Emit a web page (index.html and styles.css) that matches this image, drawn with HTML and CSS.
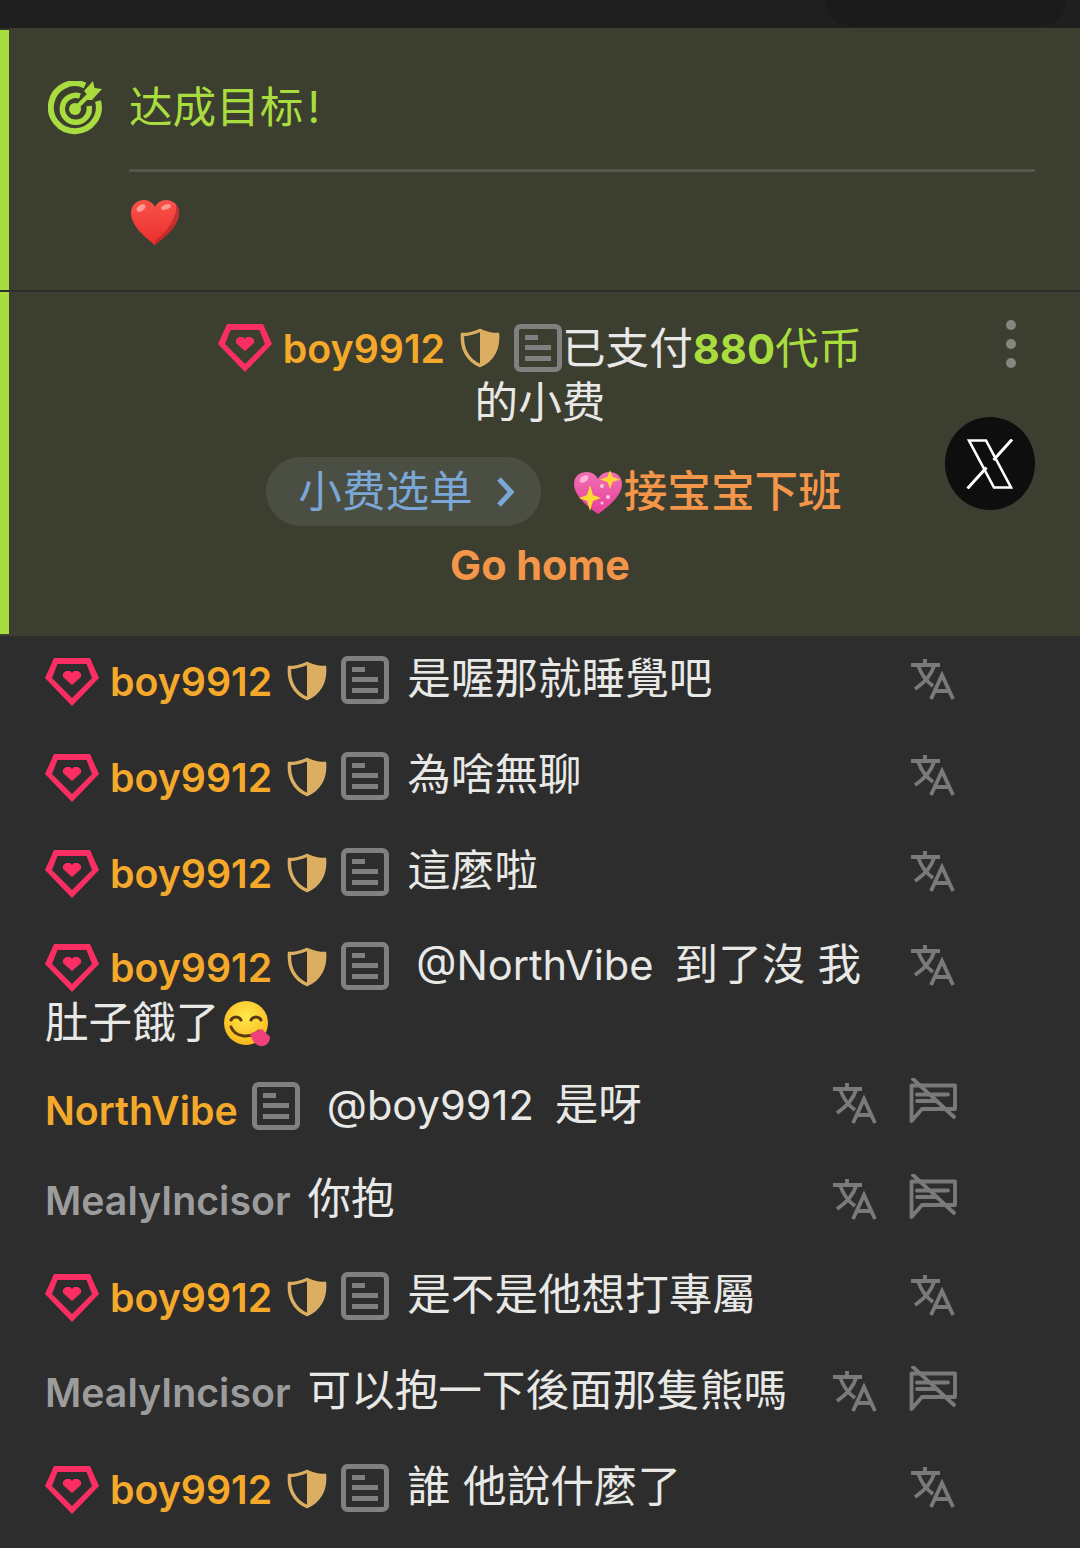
FILE: index.html
```html
<!DOCTYPE html>
<html lang="zh">
<head>
<meta charset="utf-8">
<title>Live chat</title>
<link rel="stylesheet" href="styles.css">
</head>
<body>
<svg class="defs" width="0" height="0" aria-hidden="true">
  <defs>
    <symbol id="gem" viewBox="0 0 54 48">
      <path fill="#fb2e63" fill-rule="evenodd" d="M9 0H45L54 20 27 48 0 20ZM12.500 6 7 20 27 40 47 20 41.500 6Z"/>
      <path fill="#fb2e63" d="M18 15.500 21 13H25L27 15 29 13H33L36 15.500V19L27 27 18 19Z"/>
    </symbol>
    <symbol id="shield" viewBox="0 0 40 40">
      <path fill="none" stroke="#dcae62" stroke-width="3.500" d="M20 2.500C26 5 32 6.500 37.500 6.500 38.500 20 33 32 20 37.500 7 32 1.500 20 2.500 6.500 8 6.500 14 5 20 2.500Z"/>
      <path fill="#dcae62" d="M20 2.500C26 5 32 6.500 37.500 6.500 38.500 20 33 32 20 37.500Z"/>
    </symbol>
    <symbol id="doc" viewBox="0 0 48 48">
      <rect x="2.500" y="2.500" width="43" height="43" rx="4" fill="none" stroke="#808080" stroke-width="5"/>
      <path fill="#808080" d="M11 11H24V16H11ZM11 21H37V26H11ZM11 32H37V37H11Z"/>
    </symbol>
    <symbol id="translate" viewBox="0 0 44 44">
      <g fill="none" stroke="#7a7a7a" stroke-width="3.800">
        <path d="M0 7H29M14 1V7M7 7C10 16 15 23 22 28M23 8C20 18 13 25 4 31"/>
        <path d="M20 41 31 17 42 41M24 33H38"/>
      </g>
    </symbol>
    <symbol id="mute" viewBox="0 0 48 47">
      <g fill="none" stroke="#7a7a7a" stroke-width="3.800" stroke-linejoin="round" stroke-linecap="round">
        <path d="M2.500 7.500H46V31H13L2.500 43Z"/>
        <path d="M8 16.500H39M8 23H27M4 1 45 39"/>
      </g>
    </symbol>
  </defs>
</svg>

<header class="topbar"><span class="topbar-pill"></span></header>

<main class="feed">
  <section class="goal card">
    <svg class="goal-icon" viewBox="0 0 54 54" aria-hidden="true">
      <g fill="none" stroke="#a9dc3e">
        <path stroke-width="6" d="M37 4.500A24 24 0 1 0 50 20"/>
        <path stroke-width="5.500" d="M32 15A13.500 13.500 0 1 0 41 25"/>
      </g>
      <circle cx="27" cy="28" r="6" fill="#a9dc3e"/>
      <path fill="none" stroke="#a9dc3e" stroke-width="4.500" d="M27 28 42 13"/>
      <path fill="#a9dc3e" d="M36 10 45 0 46.500 7 54 8 44 19H38L39.500 14Z"/>
    </svg>
    <div class="goal-body">
      <h2 class="goal-title">达成目标<span class="bang">!</span></h2>
      <div class="goal-note">
        <svg class="emoji" viewBox="0 0 48 46" aria-hidden="true">
          <defs>
            <linearGradient id="heart-red" x1="0" y1="0" x2="0" y2="1">
              <stop offset="0" stop-color="#f9524a"/><stop offset="1" stop-color="#ea2e2c"/>
            </linearGradient>
          </defs>
          <path fill="url(#heart-red)" d="M24 45C14 37 0 26 0 13 0 5 6 0 13 0 18 0 22 3 24 7 26 3 30 0 35 0 42 0 48 5 48 13 48 26 34 37 24 45Z"/>
          <path fill="#b5272a" d="M24 45C34 37 48 26 48 13 48 9 47 7 45 4 47 16 36 32 24 41Z" opacity=".7"/>
          <ellipse cx="10" cy="8" rx="5" ry="3" fill="#ff9a94" transform="rotate(-35 10 8)"/>
          <ellipse cx="35" cy="7" rx="5" ry="2.500" fill="#ff9a94" transform="rotate(-20 35 7)"/>
        </svg>
      </div>
    </div>
  </section>

  <section class="tip card">
    <p class="tip-line">
      <svg class="gem"><use href="#gem"/></svg><b class="name">boy9912</b><svg class="shield"><use href="#shield"/></svg><svg class="doc doc--tight"><use href="#doc"/></svg>已支付<b class="coins"><span class="latin">880</span>代币</b>的小费
    </p>
    <div class="tip-actions">
      <a class="pill">小费选单
        <svg class="chevron" viewBox="0 0 18 32" aria-hidden="true"><path d="M3 3 15 16 3 29" fill="none" stroke="#7aa7d6" stroke-width="5"/></svg>
      </a>
      <span class="tip-item">
        <svg class="emoji emoji--spark" viewBox="0 0 48 44" aria-hidden="true">
          <defs>
            <linearGradient id="heart-pink" x1="0" y1="0" x2="0" y2="1">
              <stop offset="0" stop-color="#f070b4"/><stop offset="1" stop-color="#e83e98"/>
            </linearGradient>
          </defs>
          <path fill="url(#heart-pink)" d="M24 44C14 37 0 26 0 14 0 6 6 2 13 2 18 2 22 5 24 9 26 5 30 2 35 2 42 2 48 6 48 14 48 26 34 37 24 44Z"/>
          <ellipse cx="10" cy="9" rx="5" ry="3" fill="#fbb3d9" transform="rotate(-35 10 9)"/>
          <path fill="#fdd835" d="M36 0 38.500 7 46 9.500 38.500 12 36 19 33.500 12 26 9.500 33.500 7ZM16 15 19 25 27 28 19 31 16 41 13 31 5 28 13 25Z"/>
          <circle cx="28" cy="16" r="2" fill="#fbc4e0"/><circle cx="34" cy="27" r="2" fill="#fbc4e0"/><circle cx="28" cy="33" r="1.500" fill="#fbc4e0"/>
        </svg>接宝宝下班
      </span>
    </div>
    <p class="tip-note">Go home</p>
    <div class="tip-menu"><i></i><i></i><i></i></div>
    <a class="share" aria-label="X">
      <svg viewBox="0 0 48 50" aria-hidden="true">
        <path fill="none" stroke="#fff" stroke-width="2.600" d="M3 1.500H20L45 48.500H28Z"/>
        <path fill="none" stroke="#fff" stroke-width="3" d="M46 0.500 27.500 21M1.500 49.500 20.500 28.500"/>
      </svg>
    </a>
  </section>

  <ul class="chat">
    <li class="row">
      <p class="msg"><svg class="gem"><use href="#gem"/></svg><b class="name">boy9912</b><svg class="shield"><use href="#shield"/></svg><svg class="doc"><use href="#doc"/></svg>是喔那就睡覺吧</p>
      <div class="actions"><svg class="tr"><use href="#translate"/></svg></div>
    </li>
    <li class="row">
      <p class="msg"><svg class="gem"><use href="#gem"/></svg><b class="name">boy9912</b><svg class="shield"><use href="#shield"/></svg><svg class="doc"><use href="#doc"/></svg>為啥無聊</p>
      <div class="actions"><svg class="tr"><use href="#translate"/></svg></div>
    </li>
    <li class="row">
      <p class="msg"><svg class="gem"><use href="#gem"/></svg><b class="name">boy9912</b><svg class="shield"><use href="#shield"/></svg><svg class="doc"><use href="#doc"/></svg>這麼啦</p>
      <div class="actions"><svg class="tr"><use href="#translate"/></svg></div>
    </li>
    <li class="row row--wrapped">
      <p class="msg"><svg class="gem"><use href="#gem"/></svg><b class="name">boy9912</b><svg class="shield"><use href="#shield"/></svg><svg class="doc"><use href="#doc"/></svg><span class="mention">@NorthVibe</span>到了沒 我肚子餓了<svg class="emoji emoji--yum" viewBox="0 0 48 46" aria-hidden="true">
          <defs>
            <radialGradient id="face" cx=".5" cy=".35" r=".7">
              <stop offset="0" stop-color="#ffe94d"/><stop offset="1" stop-color="#f9b317"/>
            </radialGradient>
          </defs>
          <circle cx="23" cy="22" r="22" fill="url(#face)"/>
          <g fill="none" stroke="#5b3a10" stroke-width="3" stroke-linecap="round">
            <path d="M8 19C10 15 16 15 18 19M28 19C30 15 36 15 38 19"/>
            <path d="M8 26C12 36 26 38 36 30"/>
          </g>
          <path fill="#f0417f" d="M27 33 39 28 47 36C47 42 42 46 37 45 32 44 29 39 27 33Z"/>
        </svg></p>
      <div class="actions"><svg class="tr"><use href="#translate"/></svg></div>
    </li>
    <li class="row row--after-wrap">
      <p class="msg"><b class="name name--plain">NorthVibe</b><svg class="doc"><use href="#doc"/></svg><span class="mention">@boy9912</span>是呀</p>
      <div class="actions"><svg class="tr"><use href="#translate"/></svg><svg class="off"><use href="#mute"/></svg></div>
    </li>
    <li class="row row--viewer">
      <p class="msg"><b class="name name--viewer">MealyIncisor</b>你抱</p>
      <div class="actions"><svg class="tr"><use href="#translate"/></svg><svg class="off"><use href="#mute"/></svg></div>
    </li>
    <li class="row">
      <p class="msg"><svg class="gem"><use href="#gem"/></svg><b class="name">boy9912</b><svg class="shield"><use href="#shield"/></svg><svg class="doc"><use href="#doc"/></svg>是不是他想打專屬</p>
      <div class="actions"><svg class="tr"><use href="#translate"/></svg></div>
    </li>
    <li class="row">
      <p class="msg"><b class="name name--viewer">MealyIncisor</b>可以抱一下後面那隻熊嗎</p>
      <div class="actions"><svg class="tr"><use href="#translate"/></svg><svg class="off"><use href="#mute"/></svg></div>
    </li>
    <li class="row">
      <p class="msg"><svg class="gem"><use href="#gem"/></svg><b class="name">boy9912</b><svg class="shield"><use href="#shield"/></svg><svg class="doc"><use href="#doc"/></svg>誰 他說什麼了</p>
      <div class="actions"><svg class="tr"><use href="#translate"/></svg></div>
    </li>
  </ul>
</main>
</body>
</html>
```

FILE: styles.css
```css
* { box-sizing: border-box; }

html, body {
  margin: 0;
  height: 1548px;
  overflow: hidden;
  background: #2d2d2d;
}

body {
  font-family: "Inter", "Noto Sans CJK TC", sans-serif;
  font-size: 43.6px;
  line-height: 54px;
  color: #e8e8e6;
}

p, h2, ul { margin: 0; padding: 0; font-weight: 400; }
ul { list-style: none; }
svg { flex: none; }

.defs { position: absolute; }

/* Top strip */
.topbar {
  position: relative;
  height: 28px;
  background: #1f1f1f;
}
.topbar-pill {
  position: absolute;
  left: 825px;
  top: 0;
  width: 240px;
  height: 26px;
  background: #1b1b1b;
  border-radius: 0 0 24px 24px;
}

/* Highlighted cards */
.feed { display: flex; flex-direction: column; }

.card {
  position: relative;
  background: #3c3e30;
  border-left: 9px solid #a9dc3e;
}

.goal {
  display: flex;
  height: 260px;
  margin-top: 2px;
  padding: 50px 45px 0 39px;
  gap: 27px;
  box-shadow: 9px -2px 0 #3c3e30;
}
.goal-icon { width: 54px; height: 54px; margin-top: 1px; }
.goal-body { flex: 1; }
.goal-title {
  font-family: "Inter", "Noto Sans CJK SC", sans-serif;
  font-size: 43.6px;
  line-height: 56px;
  color: #a9dc3e;
  padding-bottom: 33px;
  border-bottom: 3px solid #55574c;
}
.bang { margin-left: 4px; }
.goal-note { padding-top: 28px; padding-left: 2px; line-height: 0; }

.emoji { width: 48px; height: 46px; }
.emoji--yum {
  width: 48px;
  height: 46px;
  margin: -10px 0 -10px 4px;
  vertical-align: 1px;
}

.tip {
  height: 342px;
  margin-top: 2px;
  padding: 30px 210px 0 201px;
  text-align: center;
  font-family: "Inter", "Noto Sans CJK SC", sans-serif;
  box-shadow: 0 2px 0 #3c3e30;
}
.tip-line { line-height: 54px; }
.tip-line .gem { vertical-align: 2px; }
.tip-line .name { vertical-align: 1px; }
.tip-line .shield { vertical-align: 6px; }
.tip-line .doc { vertical-align: 2px; }
.coins { font-weight: 400; color: #a9dc3e; }
.coins .latin { font-size: 41.6px; font-weight: 700; }

.tip-actions {
  display: flex;
  justify-content: center;
  align-items: center;
  gap: 33px;
  margin: 27px -100px 0 -72px;
}
.pill {
  display: flex;
  align-items: center;
  gap: 23px;
  height: 69px;
  padding: 0 27px 0 32px;
  border-radius: 35px;
  background: #4b4e42;
  color: #7aa7d6;
}
.chevron { width: 18px; height: 32px; }
.tip-item {
  display: flex;
  align-items: center;
  color: #f4964a;
  font-weight: 500;
}
.emoji--spark { width: 48px; height: 44px; margin-right: 2px; }
.tip-note {
  margin-top: 12px;
  font-size: 41.4px;
  font-weight: 700;
  line-height: 54px;
  color: #f4964a;
}

.tip-menu {
  position: absolute;
  right: 64px;
  top: 28px;
  display: flex;
  flex-direction: column;
  gap: 9px;
}
.tip-menu i {
  width: 10px;
  height: 10px;
  border-radius: 50%;
  background: #86877f;
}

.share {
  position: absolute;
  right: 45px;
  top: 125px;
  width: 90px;
  height: 93px;
  border-radius: 50%;
  background: #0e0e0e;
  display: flex;
  align-items: center;
  justify-content: center;
}
.share svg { width: 48px; height: 50px; }

/* Chat list */
.chat { margin-top: 2px; }

.row {
  display: flex;
  align-items: flex-start;
  gap: 24px;
  padding: 21px 123px 21px 45px;
}
.row:first-child { margin-top: -5px; }
.row--wrapped { margin-top: -4px; }
.row--wrapped .msg { line-height: 58px; }
.row--wrapped .tr { margin-top: 8px; }
.row--after-wrap { margin-top: -16px; }
.row--after-wrap .tr { margin-top: 4px; }
.row--after-wrap .off { margin-top: 0; }
.row--viewer { margin-top: -2px; }

.msg { flex: 1; min-width: 0; line-height: 54px; }

.name {
  font-size: 39.3px;
  font-weight: 600;
  line-height: 1;
  vertical-align: -2px;
  color: #f5a92b;
}
.name--plain { margin-right: 14px; vertical-align: -5px; }
.name--viewer { color: #9c9c9c; margin-right: 17px; vertical-align: -1px; }

.gem {
  width: 54px;
  height: 48px;
  margin: -10px 11px -10px 0;
  vertical-align: -2px;
}
.shield {
  width: 40px;
  height: 40px;
  margin: -10px 14px -10px 15px;
  vertical-align: 3px;
}
.doc {
  width: 48px;
  height: 48px;
  margin: -10px 18px -10px 0;
  vertical-align: 0;
}
.doc--tight { margin-right: 0; }

.mention { font-size: 41.6px; margin: 0 21px 0 9px; }

.actions {
  display: flex;
  align-items: flex-start;
  gap: 32px;
}
.tr { width: 44px; height: 44px; margin-top: 6px; }
.tr:last-child { margin-right: 2px; }
.off { width: 48px; height: 47px; margin-top: 2px; }
```
